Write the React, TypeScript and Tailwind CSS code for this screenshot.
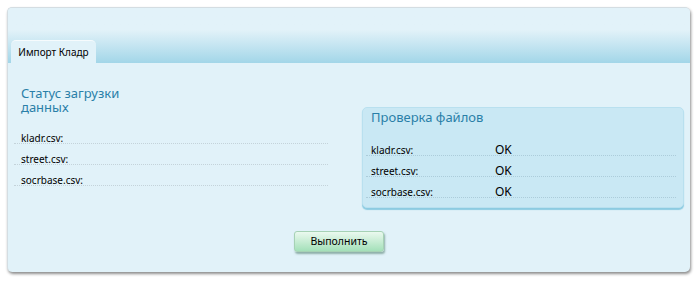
const leftRows = ['kladr.csv:', 'street.csv:', 'socrbase.csv:']
const checkRows = [
  { name: 'kladr.csv:', status: 'OK' },
  { name: 'street.csv:', status: 'OK' },
  { name: 'socrbase.csv:', status: 'OK' },
]

export default function App() {
  return (
    <div className="w-[700px] h-[285px] bg-white pt-[7px] pl-[7px] font-['Noto_Sans',sans-serif] text-black">
      <div className="w-[683px] h-[265px] rounded-[5px] bg-[#e1f2f9] border-t border-l border-[#d4dde2] shadow-[1px_2px_3px_rgba(0,0,0,0.45)] flex flex-col overflow-hidden">
        {/* header band with tab */}
        <div className="h-[55px] bg-gradient-to-b from-[#e2f2f9] from-40% to-[#a2d6e8] flex items-end pl-[3px]">
          <div className="w-[85px] h-[23px] rounded-t-[5px] bg-[#e1f2f9] border-t border-white/70 text-[10px] flex items-center justify-center">
            Импорт Кладр
          </div>
        </div>

        <div className="flex">
          <div className="ml-[6px] w-[314px] pt-[23px]">
            <h2 className="pl-[7px] w-[130px] text-[13px] leading-[14px] text-[#2a7fa8]">Статус загрузки данных</h2>
            <div className="mt-[9px]">
              {leftRows.map((r) => (
                <div key={r} className="h-[21px] flex items-end pl-[7px] border-b border-dotted border-[#c4d3da]">
                  <span className="text-[10px] leading-[9px]">{r}</span>
                </div>
              ))}
            </div>
          </div>

          <div className="ml-auto mr-[6px] mt-[44px] w-[322px] h-[101px] rounded-[5px] bg-[#c9e8f4] border border-[#b9e0ef] shadow-[0_2px_1px_#8ccbe1] pl-[3px] pr-[7px] pt-[2px]">
            <h3 className="pl-[5px] text-[13px] leading-[15px] text-[#2a7fa8]">Проверка файлов</h3>
            <div className="mt-[10px]">
              {checkRows.map((r) => (
                <div key={r.name} className="h-[21px] flex items-end pl-[5px] border-b border-dotted border-[#acccda]">
                  <span className="w-[124px] text-[10px] leading-[9px]">{r.name}</span>
                  <span className="text-[12px] leading-[10px]">{r.status}</span>
                </div>
              ))}
            </div>
          </div>
        </div>

        <div className="pl-[286px] mt-[19px]">
          <button className="w-[90px] h-[21px] rounded-[3px] bg-gradient-to-b from-[#eaf9ef] to-[#a3e0b9] border border-[#a6d2b5] shadow-[1px_2px_2px_rgba(60,110,90,0.5)] text-[10.5px] leading-none">
            Выполнить
          </button>
        </div>
      </div>
    </div>
  )
}
